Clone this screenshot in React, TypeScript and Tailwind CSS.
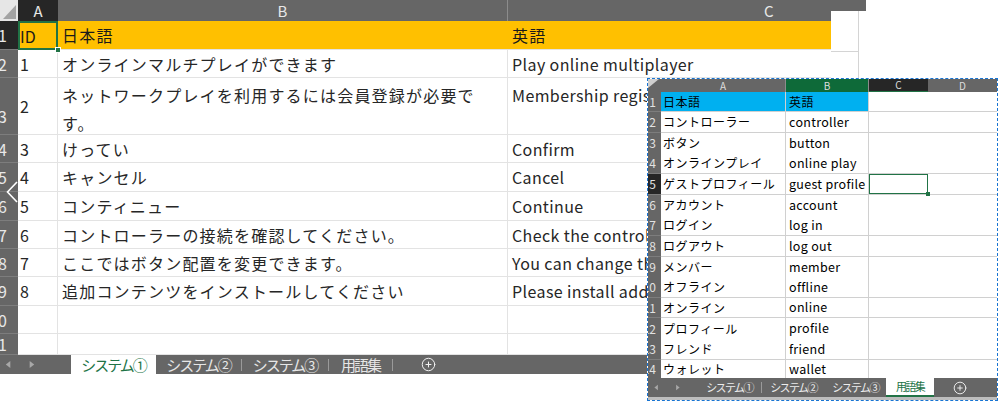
import { CirclePlus } from "lucide-react";
import type { ReactNode } from "react";

const FONT = "font-['Noto_Sans_CJK_JP','Noto_Sans',sans-serif]";

type MainRow = {
  n: string;
  h: string;
  id: string;
  jp: ReactNode;
  en: string;
  tall?: boolean;
};

const mainRows: MainRow[] = [
  { n: "2", h: "h-[28px]", id: "1", jp: "オンラインマルチプレイができます", en: "Play online multiplayer" },
  {
    n: "3",
    h: "h-[57px]",
    id: "2",
    jp: (
      <>
        ネットワークプレイを利用するには会員登録が必要で
        <br />
        す。
      </>
    ),
    en: "Membership registration is required",
    tall: true,
  },
  { n: "4", h: "h-[28px]", id: "3", jp: "けってい", en: "Confirm" },
  { n: "5", h: "h-[29px]", id: "4", jp: "キャンセル", en: "Cancel" },
  { n: "6", h: "h-[29px]", id: "5", jp: "コンティニュー", en: "Continue" },
  { n: "7", h: "h-[28px]", id: "6", jp: "コントローラーの接続を確認してください。", en: "Check the controller connection." },
  { n: "8", h: "h-[28px]", id: "7", jp: "ここではボタン配置を変更できます。", en: "You can change the button layout here." },
  { n: "9", h: "h-[29px]", id: "8", jp: "追加コンテンツをインストールしてください", en: "Please install additional content." },
  { n: "10", h: "h-[28px]", id: "", jp: "", en: "" },
  { n: "11", h: "h-[21px]", id: "", jp: "", en: "" },
];

const glossary: { jp: string; en: string; h: string; line: boolean }[] = [
  { jp: "日本語", en: "英語", h: "h-[20px]", line: true },
  { jp: "コントローラー", en: "controller", h: "h-[21px]", line: true },
  { jp: "ボタン", en: "button", h: "h-[20px]", line: false },
  { jp: "オンラインプレイ", en: "online play", h: "h-[21px]", line: true },
  { jp: "ゲストプロフィール", en: "guest profile", h: "h-[21px]", line: true },
  { jp: "アカウント", en: "account", h: "h-[20px]", line: false },
  { jp: "ログイン", en: "log in", h: "h-[21px]", line: true },
  { jp: "ログアウト", en: "log out", h: "h-[21px]", line: true },
  { jp: "メンバー", en: "member", h: "h-[20px]", line: false },
  { jp: "オフライン", en: "offline", h: "h-[21px]", line: true },
  { jp: "オンライン", en: "online", h: "h-[20px]", line: true },
  { jp: "プロフィール", en: "profile", h: "h-[21px]", line: false },
  { jp: "フレンド", en: "friend", h: "h-[21px]", line: true },
  { jp: "ウォレット", en: "wallet", h: "h-[18px]", line: false },
];

function ScrollArrows({ size }: { size: number }) {
  return (
    <div className="flex items-center gap-[14px] text-[#a8a8a8]">
      <svg width={size} height={size} viewBox="0 0 10 10">
        <path d="M7 1 L2 5 L7 9 Z" fill="currentColor" />
      </svg>
      <svg width={size} height={size} viewBox="0 0 10 10">
        <path d="M3 1 L8 5 L3 9 Z" fill="currentColor" />
      </svg>
    </div>
  );
}

function MainSheet() {
  return (
    <div className="flex w-[866px] shrink-0">
      <div className="relative flex w-[831px] flex-col">
        {/* column headers */}
        <div className="flex h-[21px] text-[15px] leading-none text-[#e8e8e8]">
          <div className="w-[18px] bg-[#e6e6e6]">
            <svg width="18" height="21" viewBox="0 0 18 21">
              <path d="M16 5 L16 19 L3 19 Z" fill="#a3a3a3" />
            </svg>
          </div>
          <div className="flex w-[40px] items-center justify-center bg-[#262626]">A</div>
          <div className="flex w-[450px] items-center justify-center border-r border-[#8c8c8c] bg-[#666666]">B</div>
          <div className="flex flex-1 items-center bg-[#666666] pl-[256px]">C</div>
        </div>

        {/* row 1 */}
        <div className="flex h-[29px] text-[16px] text-[#1a1a1a]">
          <div className="flex w-[18px] items-center justify-end overflow-hidden whitespace-nowrap border-b border-[#7d7d7d] bg-[#262626] pr-[11px] text-[#e8e8e8]">
            1
          </div>
          <div className="relative flex w-[40px] items-center bg-[#ffc000] pl-[2px]">
            ID
            <div className="absolute inset-0 border-2 border-[#217346]" />
            <div className="absolute -bottom-[3px] -right-[3px] h-[6px] w-[6px] border border-white bg-[#217346]" />
          </div>
          <div className="flex w-[450px] items-center border-b border-[#e3e3e3] bg-[#ffc000] pl-[4px] tracking-[1.2px]">
            日本語
          </div>
          <div className="flex flex-1 items-center border-b border-[#e3e3e3] bg-[#ffc000] pl-[4px] tracking-[1.2px]">
            英語
          </div>
        </div>

        {mainRows.map((r) => (
          <div key={r.n} className={`flex ${r.h} text-[16px] text-[#262626]`}>
            <div
              className={`flex w-[18px] justify-end overflow-hidden whitespace-nowrap border-b border-[#7d7d7d] bg-[#666666] pr-[11px] text-[#e8e8e8] ${
                r.tall ? "items-end pb-[6px]" : "items-center"
              }`}
            >
              {r.n}
            </div>
            <div className="flex w-[40px] items-center border-b border-r border-[#e3e3e3] pl-[2px]">{r.id}</div>
            <div
              className={`flex w-[450px] border-b border-r border-[#e3e3e3] pl-[4px] tracking-[1.2px] ${
                r.tall ? "items-start pt-[3px] leading-[28px]" : "items-center"
              }`}
            >
              <span>{r.jp}</span>
            </div>
            <div
              className={`flex flex-1 overflow-hidden whitespace-nowrap border-b border-[#e3e3e3] pl-[4px] tracking-[0.4px] ${
                r.tall ? "items-start pt-[3px] leading-[28px]" : "items-center"
              }`}
            >
              {r.en}
            </div>
          </div>
        ))}

        {/* sheet tabs */}
        <div className="flex h-[19px] items-stretch bg-[#666666] text-[15px] leading-none tracking-[-2px] text-[#e6e6e6]">
          <div className="flex w-[71px] items-center pl-[4px]">
            <ScrollArrows size={9} />
          </div>
          <div className="flex w-[85px] items-center justify-center bg-white text-[#217346]">システム①</div>
          <div className="flex w-[85px] items-center justify-center">システム②</div>
          <div className="my-auto h-[12px] w-px bg-[#9a9a9a]" />
          <div className="flex w-[86px] items-center justify-center">システム③</div>
          <div className="my-auto h-[12px] w-px bg-[#9a9a9a]" />
          <div className="flex w-[63px] items-center justify-center">用語集</div>
          <div className="my-auto h-[12px] w-px bg-[#9a9a9a]" />
          <div className="flex w-[70px] items-center justify-center">
            <CirclePlus size={15} strokeWidth={1.6} color="#f2f2f2" />
          </div>
        </div>

        <svg className="absolute left-[6px] top-[181px]" width="12" height="22" viewBox="0 0 12 22">
          <polyline points="11,1 1.5,11 11,21" fill="none" stroke="#ffffff" strokeWidth="1.6" />
        </svg>
      </div>

      <div className="flex w-[35px] flex-col">
        <div className="h-[11px] bg-[#666666]" />
        <div className="h-[41px] w-[28px] border-b border-r border-[#d4d4d4]" />
        <div className="h-[26px] w-[28px] border-r border-[#d4d4d4]" />
      </div>
    </div>
  );
}

function Glossary() {
  return (
    <div className="absolute left-[647px] top-[78px] flex w-[351px] flex-col border border-dashed border-[#1874d2] bg-white">
      {/* column headers */}
      <div className="flex h-[13px] text-[10px] leading-none text-[#dddddd]">
        <div className="w-[13px] bg-[#666666]">
          <svg width="13" height="13" viewBox="0 0 13 13">
            <path d="M0 0 L11 0 L0 9 Z" fill="#cfcfcf" />
          </svg>
        </div>
        <div className="flex w-[125px] items-center justify-center border-r border-[#8c8c8c] bg-[#666666]">A</div>
        <div className="flex w-[83px] items-center justify-center border-r border-[#8c8c8c] bg-[#0e6a39]">B</div>
        <div className="flex w-[59px] items-center justify-center border-b border-[#217346] bg-[#262626]">C</div>
        <div className="flex flex-1 items-center justify-center bg-[#666666]">D</div>
      </div>

      {glossary.map((g, i) => {
        const head = i === 0;
        const sel = i === 4;
        const line = g.line ? "border-b" : "";
        return (
          <div key={g.jp} className={`flex ${g.h} text-black`}>
            <div
              className={`flex w-[13px] items-center justify-end overflow-hidden whitespace-nowrap pr-[5px] text-[12px] text-[#e2e2e2] ${
                sel ? "bg-[#262626]" : "bg-[#666666]"
              } ${line} border-[#7d7d7d]`}
            >
              {i + 1}
            </div>
            <div
              className={`flex w-[125px] items-center overflow-hidden whitespace-nowrap border-r border-[#d0d0d0] pl-[2px] text-[12px] tracking-[0.5px] ${line} ${
                head ? "bg-[#00b0f0]" : ""
              }`}
            >
              {g.jp}
            </div>
            <div
              className={`flex w-[83px] items-center overflow-hidden whitespace-nowrap border-r border-[#d0d0d0] pl-[3px] ${
                head ? "bg-[#00b0f0] text-[12px] tracking-[0.5px]" : "text-[12.5px] tracking-[0.3px]"
              } ${line}`}
            >
              {g.en}
            </div>
            <div className={`relative w-[59px] border-[#d0d0d0] ${line}`}>
              {sel && (
                <>
                  <div className="absolute inset-0 border border-[#217346]" />
                  <div className="absolute -bottom-[2px] -right-[2px] h-[4px] w-[4px] bg-[#217346]" />
                </>
              )}
            </div>
            <div className={`flex-1 border-[#d0d0d0] ${line}`} />
          </div>
        );
      })}

      {/* sheet tabs */}
      <div className="flex h-[19px] items-stretch bg-[#666666] text-[11px] leading-none tracking-[-1.6px] text-[#ececec]">
        <div className="flex w-[50px] items-center pl-[5px]">
          <ScrollArrows size={7} />
        </div>
        <div className="flex w-[63px] items-center justify-center">システム①</div>
        <div className="my-auto h-[11px] w-px bg-[#9a9a9a]" />
        <div className="flex w-[63px] items-center justify-center">システム②</div>
        <div className="flex w-[61px] items-center justify-center">システム③</div>
        <div className="flex w-[48px] items-center justify-center border-b-2 border-[#217346] bg-white text-[#217346]">
          用語集
        </div>
        <div className="flex w-[52px] items-center justify-center">
          <CirclePlus size={14} strokeWidth={1.6} color="#f2f2f2" />
        </div>
      </div>
      <div className="h-[3px] bg-[#bdbdbd]" />
    </div>
  );
}

export default function App() {
  return (
    <div className={`relative h-[408px] w-[999px] overflow-hidden bg-white ${FONT}`}>
      <MainSheet />
      <Glossary />
    </div>
  );
}
